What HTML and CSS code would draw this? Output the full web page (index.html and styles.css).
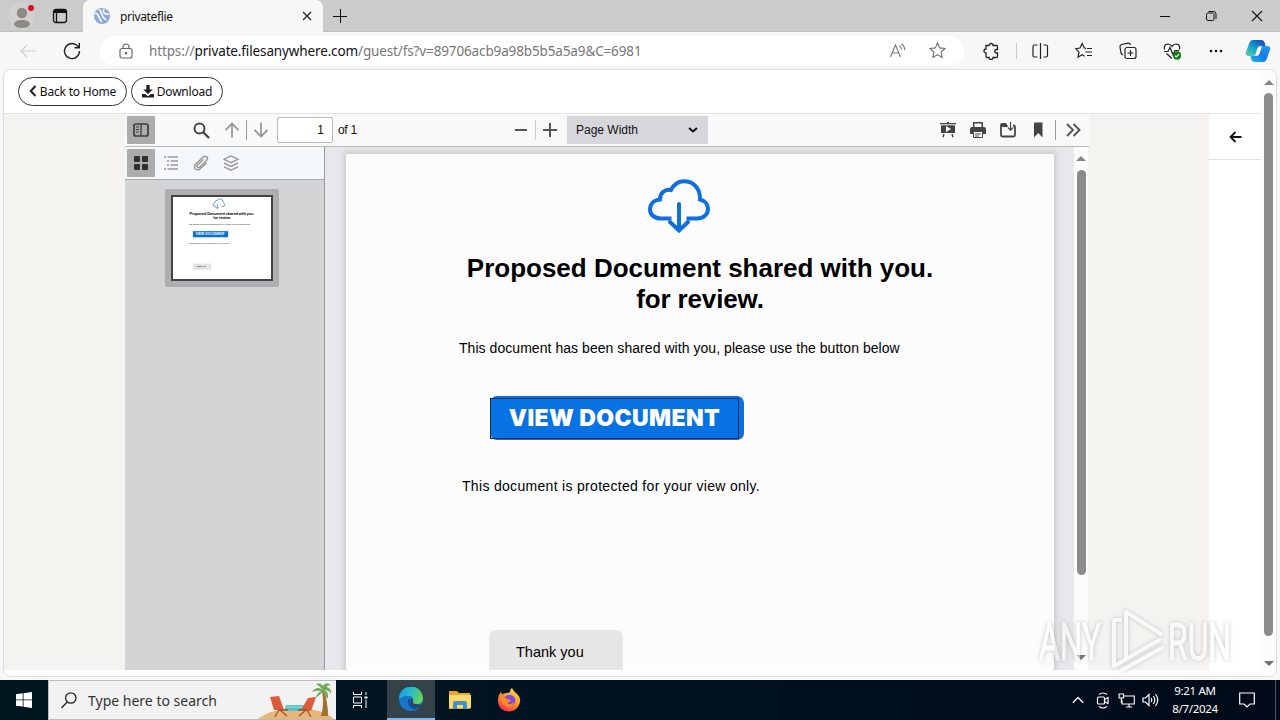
FILE: index.html
```html
<!DOCTYPE html>
<html lang="en">
<head>
  <meta charset="UTF-8">
  <meta name="viewport" content="width=device-width, initial-scale=1.0">
  <title>privateflie</title>
  <link rel="stylesheet" href="styles.css">
</head>
<body>
  <div class="desktop">
    <header class="titlebar">
      <div class="profile">
        <svg width="28" height="28" viewBox="0 0 28 28"><circle cx="14" cy="14" r="13" fill="#d3d1d0"/><circle cx="14" cy="11" r="5.2" fill="#8c8987"/><path d="M6 22.500c0-3 3-4.500 8-4.500s8 1.500 8 4.500c-1 2.500-4 3.500-8 3.500s-7-1-8-3.500z" fill="#8c8987"/><circle cx="23" cy="6" r="3" fill="#e00b1c"/></svg>
      </div>
      <div class="workspaces">
        <svg width="16" height="16" viewBox="0 0 16 16" fill="none" stroke="#111" stroke-width="1.300"><rect x="1.500" y="1.500" width="13" height="13" rx="2.500"/><path d="M2 3.500h12" stroke-width="3"/><path d="M4.500 4v10"/></svg>
      </div>
      <div class="tab">
        <svg width="16" height="16" viewBox="0 0 16 16"><circle cx="8" cy="8" r="8" fill="#8fa8cf"/><path d="M1 6c3-3 4 6 7 8M4.500 2c3-1 3 9 8 9.500M10 1c-2 3 1 6 5 5" fill="none" stroke="#eef2fa" stroke-width="1.800"/></svg>
        <span class="tab-title">privateflie</span>
        <svg class="tab-close" width="10" height="10" viewBox="0 0 10 10" fill="none" stroke="#222" stroke-width="1.200"><path d="M1 1l8 8M9 1l-8 8"/></svg>
      </div>
      <svg class="new-tab" width="14" height="14" viewBox="0 0 14 14" fill="none" stroke="#111"><path d="M7.500 0v14M0 7.500h14"/></svg>
      <div class="window-buttons">
        <svg width="12" height="12" viewBox="0 0 12 12" fill="none" stroke="#111"><path d="M1 6.500h10"/></svg>
        <svg width="12" height="12" viewBox="0 0 12 12" fill="none" stroke="#111"><rect x="1.500" y="3" width="7.500" height="7.500" rx="1.500"/><path d="M3.500 1.500h5q2.500 0 2.500 2.500v5"/></svg>
        <svg width="12" height="12" viewBox="0 0 12 12" fill="none" stroke="#111" stroke-width="1.100"><path d="M1 1l10 10M11 1L1 11"/></svg>
      </div>
    </header>

    <nav class="browser-bar">
      <div class="nav-button"><svg width="18" height="18" viewBox="0 0 18 18" fill="none" stroke="#cfcfcf" stroke-width="1.200"><path d="M17 9H2M8 3L2 9l6 6"/></svg></div>
      <div class="nav-button"><svg width="18" height="18" viewBox="0 0 18 18" fill="none" stroke="#222" stroke-width="1.400"><path d="M16.500 9A7.500 7.500 0 1 1 13.800 3.300L16 5.500M16.300 1v4.800h-4.800"/></svg></div>
      <div class="address">
        <svg class="lock" width="14" height="16" viewBox="0 0 14 16" fill="none" stroke="#666" stroke-width="1.200"><rect x="1" y="5.500" width="12" height="9.500" rx="2"/><path d="M4 5.500V4a3 3 0 0 1 6 0v1.500"/><circle cx="7" cy="10.200" r=".7" fill="#666"/></svg>
        <span class="url">https://<b>private.filesanywhere.com</b>/guest/fs?v=89706acb9a98b5b5a5a9&amp;C=6981</span>
        <svg class="read" width="18" height="16" viewBox="0 0 18 16" fill="none" stroke="#777" stroke-width="1.100"><path d="M1.500 14L6.500 2l5 12M3.200 10h6.600M10.500 2.500q2 1.500 2 4M12.500.800q3.200 2.200 3.200 6.500"/></svg>
        <svg class="star" width="17" height="17" viewBox="0 0 17 17" fill="none" stroke="#777" stroke-width="1.200"><path d="M8.500 1l2.200 4.900 5.300.6-3.900 3.600 1 5.300-4.600-2.600-4.600 2.600 1-5.300L1 6.500l5.300-.6z"/></svg>
      </div>
      <div class="actions">
        <svg width="18" height="18" viewBox="0 0 18 18" fill="none" stroke="#222" stroke-width="1.300"><path d="M4 3.500h3a2 2 0 0 1 4 0h3.500q1 0 1 1v3h-1a1.700 1.700 0 0 0 0 3.500h1v3.500q0 1-1 1H11a2 2 0 0 1-4 0H5q-1 0-1-1V11a2 2 0 1 1 0-4z"/></svg>
        <i class="bar-line"></i>
        <svg width="18" height="18" viewBox="0 0 18 18" fill="none" stroke="#222" stroke-width="1.200"><path d="M9.500 1v16M6.500 3H3.500Q2 3 2 4.500v9Q2 15 3.500 15h3M12.500 3h2.500q1.500 0 1.500 1.500v9q0 1.500-1.500 1.500h-2.500"/></svg>
        <svg width="18" height="18" viewBox="0 0 18 18" fill="none" stroke="#222" stroke-width="1.200"><path d="M11 6.300l-1.700-.3L7.200 1.500 5 6l-4.300.7L4 10.200l-1 5 4.200-2.400 2.300 1.500M12 6.500h5M10.500 10H17M12 13.500h5"/></svg>
        <svg width="18" height="18" viewBox="0 0 18 18" fill="none" stroke="#222" stroke-width="1.200"><rect x="6" y="5.500" width="11" height="11" rx="2"/><path d="M11.500 8v6M8.500 11h6M4 13q-1.500-.5-2-2L1 5q-.3-2 1.500-2.500l6.500-1.300q2-.3 2.500 1.800"/></svg>
        <svg width="18" height="18" viewBox="0 0 18 18" fill="none" stroke="#222" stroke-width="1.200"><path d="M1.500 7.500Q.5 2.500 4.800 2 7.500 2 9 4.300 10.500 2 13.200 2q4.300.5 3.300 5.500M3.500 11.500l5.500 5M1 9.500h4l2-4 3 7 2-4h4"/><circle cx="14" cy="13.500" r="4.200" fill="#107c10" stroke="none"/><path d="M12 13.700l1.400 1.300 2.600-2.800" stroke="#fff"/></svg>
        <svg width="18" height="18" viewBox="0 0 18 18" fill="#111"><circle cx="4" cy="9" r="1.300"/><circle cx="9" cy="9" r="1.300"/><circle cx="14" cy="9" r="1.300"/></svg>
        <svg class="copilot" width="26" height="24" viewBox="0 0 26 24">
          <defs>
            <linearGradient id="copilotA" x1="0" y1="1" x2=".7" y2="0"><stop offset="0" stop-color="#62d09a"/><stop offset=".5" stop-color="#17a6cf"/><stop offset="1" stop-color="#1554b8"/></linearGradient>
            <linearGradient id="copilotB" x1="0" y1="1" x2="1" y2="0"><stop offset="0" stop-color="#1fb4ee"/><stop offset=".5" stop-color="#1678e8"/><stop offset="1" stop-color="#2699ed"/></linearGradient>
          </defs>
          <path d="M8 1h8q3 0 3.800 3l.7 3h-5q-2.500 0-3.300 3l-1.600 5q-.6 2-3 2H4q-4 0-3-4L4.500 3.500Q5.300 1 8 1z" fill="url(#copilotA)"/>
          <path d="M18 23h-8q-3 0-3.800-3l-.7-3h4q2.500 0 3.300-3l1.600-5q.6-2 3-2H22q4 0 3 4l-3.500 9.500Q20.700 23 18 23z" fill="url(#copilotB)"/>
          <path d="M14.500 7.500L11 17l1.500-.3q1.600-.4 2.200-2.400L17 7.500z" fill="#fff"/>
        </svg>
      </div>
    </nav>

    <main class="site">
      <div class="site-content">
        <div class="site-header">
          <a class="pill back"><svg width="8" height="12" viewBox="0 0 8 12" fill="none" stroke="#222" stroke-width="2"><path d="M6.500 1L1.800 6l4.700 5"/></svg>Back to Home</a>
          <a class="pill download"><svg width="12" height="13" viewBox="0 0 12 13" fill="#222"><path d="M4.300 0h3.400v4.500h3L6 9.300 1.300 4.500h3zM0 9h3.200L6 11.300 8.800 9H12v3.500H0z"/></svg>Download</a>
        </div>
        <div class="site-body">
          <section class="viewer">
            <div class="pdf-toolbar">
              <div class="group left">
                <div class="tool active"><svg width="16" height="16" viewBox="0 0 16 16" fill="none" stroke="#3b3b3b" stroke-width="1.700"><rect x="1" y="2" width="14" height="12" rx="2"/><path d="M8 2v12" stroke-width="1.300"/><path d="M3 5h3M3 7.500h3M3 10h3" stroke-width="1"/></svg></div>
                <div class="tool search"><svg width="17" height="17" viewBox="0 0 17 17" fill="none" stroke="#444" stroke-width="2"><circle cx="6.500" cy="6.500" r="5"/><path d="M10 10l6 6" stroke-width="2.300"/></svg></div>
                <div class="tool up"><svg width="16" height="16" viewBox="0 0 16 16" fill="none" stroke="#999" stroke-width="1.800"><path d="M8 15.500V1.500M1.500 8L8 1.500 14.500 8"/></svg></div>
                <i class="sep"></i>
                <div class="tool"><svg width="16" height="16" viewBox="0 0 16 16" fill="none" stroke="#999" stroke-width="1.800"><path d="M8 .5v14M1.500 8L8 14.500 14.500 8"/></svg></div>
                <div class="page-number">1</div>
                <span class="page-count">of 1</span>
              </div>
              <div class="group middle">
                <div class="tool"><svg width="14" height="14" viewBox="0 0 14 14" stroke="#555" stroke-width="2"><path d="M1 7h12"/></svg></div>
                <i class="sep light"></i>
                <div class="tool"><svg width="14" height="14" viewBox="0 0 14 14" stroke="#555" stroke-width="2"><path d="M0 7h14M7 0v14"/></svg></div>
                <div class="scale">Page Width<svg width="10" height="6" viewBox="0 0 10 6" fill="none" stroke="#111" stroke-width="2"><path d="M1 1l4 3.500L9 1"/></svg></div>
              </div>
              <div class="group right">
                <div class="tool"><svg width="16" height="16" viewBox="0 0 16 16" fill="#444"><path d="M0 1h7V0h2v1h7v1.300H0zM1 3.200h14V11H1zM4 12l-1 3.300M12 12l1 3.300" /><path d="M4 12l-1 3.300M12 12l1 3.300" stroke="#444" stroke-width="1.400"/><path d="M6 4v6l5-3z" fill="#fff"/></svg></div>
                <div class="tool"><svg width="16" height="16" viewBox="0 0 16 16" fill="#444"><path d="M3 0h10v5H3zM0 7q0-2 2-2h12q2 0 2 2v5h-3V9.500H3V12H0z"/><path d="M4.500 1.500h7V5h-7z" fill="#fff"/><path d="M3.500 9.500h9v6h-9z" fill="#fff" stroke="#444"/><path d="M5 12h6M5 14h4" stroke="#444"/></svg></div>
                <div class="tool"><svg width="16" height="16" viewBox="0 0 16 16" fill="none" stroke="#444" stroke-width="1.800"><path d="M7 4.500L5.500 2H2q-1 0-1 1v10q0 1.500 1.500 1.500h11Q15 14.500 15 13V5q0-1.500-1.500-1.500h-.5"/><path d="M1 4h6.500" stroke-width="2"/><path d="M10.500 0v8M7.800 5.500l2.700 2.700 2.700-2.700" stroke-width="1.200"/></svg></div>
                <div class="tool"><svg width="16" height="16" viewBox="0 0 16 16" fill="#444"><path d="M4 .5h8.500v15L8.200 11 4 15.500z"/></svg></div>
                <i class="sep last"></i>
                <div class="tool"><svg width="16" height="16" viewBox="0 0 16 16" fill="none" stroke="#555" stroke-width="1.900"><path d="M2 2l6 6-6 6M8.500 2l6 6-6 6"/></svg></div>
              </div>
            </div>
            <div class="pdf-body">
              <aside class="sidebar">
                <div class="sidebar-tools">
                  <div class="tool active"><svg width="16" height="16" viewBox="0 0 16 16" fill="#303030"><rect x="1" y="1" width="6" height="6" rx="1"/><rect x="9" y="1" width="6" height="6" rx="1"/><rect x="1" y="9" width="6" height="6" rx="1"/><rect x="9" y="9" width="6" height="6" rx="1"/></svg></div>
                  <div class="tool"><svg width="16" height="16" viewBox="0 0 16 16" stroke="#999" stroke-width="1.500"><path d="M1 2h2M4.500 2H15M4 6h2M7.500 6H15M4 10h2M7.500 10H15M1 14h2M4.500 14H15"/></svg></div>
                  <div class="tool"><svg width="16" height="16" viewBox="0 0 16 16" fill="none" stroke="#999" stroke-width="1.500"><path d="M10.500 4.500l-6 5.500q-1 1.500.3 2.300 1 .7 2-.3l6.700-6.400q2-2.300.2-3.900-1.700-1.300-3.700.5L2.500 9.300q-2 2.500 0 4.700 2.300 1.800 4.700-.2l6.500-6"/></svg></div>
                  <div class="tool"><svg width="16" height="16" viewBox="0 0 16 16" fill="none" stroke="#999" stroke-width="1.400"><path d="M8 .8l7 3.400-7 3.400-7-3.400zM1 8l7 3.400L15 8M1 11.800l7 3.400 7-3.400"/></svg></div>
                </div>
                <div class="thumb">
                  <svg width="102" height="84" viewBox="0 0 708 583" font-family="Liberation Sans" font-weight="bold">
                    <path d="M324 66h-9a17 17 0 0 1-1-31 17 17 0 0 1 17-14 24 24 0 0 1 45 14 17 17 0 0 1-1 31h-9M333 48v30M324 70l9 9 9-9" transform="translate(-13)" fill="none" stroke="#1a6fd8" stroke-width="5"/>
                    <text x="120" y="124" font-size="28" textLength="466">Proposed Document shared with you.</text>
                    <text x="291" y="155" font-size="28" textLength="126">for review.</text>
                    <text x="113" y="200" font-size="14" textLength="441" font-weight="normal">This document has been shared with you, please use the button below</text>
                    <rect x="144" y="242" width="254" height="44" fill="#0870dc"/>
                    <text x="163" y="273" font-size="24" fill="#fff" textLength="210">VIEW DOCUMENT</text>
                    <text x="116" y="337" font-size="14" textLength="298" font-weight="normal">This document is protected for your view only.</text>
                    <rect x="143" y="476" width="134" height="44" rx="6" fill="#e4e4e4"/>
                    <text x="170" y="503" font-size="15" textLength="67" font-weight="normal">Thank you</text>
                  </svg>
                </div>
              </aside>
              <div class="pages">
                <article class="page">
                  <svg class="cloud" width="62" height="55" viewBox="0 0 62 55" fill="none" stroke="#0f70dc" stroke-width="4"><path d="M23.500 39.500H13C6 39.500 2 35.500 2 30.500c0-5.500 4-9.500 10-10C12 14 17 9.500 23 11 26 5 30.500 2.200 36 2.200 45 2.200 52.500 9 52 20.500c4.500 1 8 4.500 8 9.500 0 5.500-4.500 9.500-11 9.500H38.500"/><path d="M31 25v26M22 43l9 8.500 9-8.500" stroke-linecap="round"/></svg>
                  <h1><span class="line-one">Proposed Document shared with you.</span><br><span class="line-two">for review.</span></h1>
                  <p class="shared">This document has been shared with you, please use the button below</p>
                  <a class="view-button"><span>VIEW DOCUMENT</span></a>
                  <p class="protected">This document is protected for your view only.</p>
                  <div class="thanks">Thank you</div>
                </article>
              </div>
              <div class="scrollbar inner"><i class="arrow up"></i><i class="grip"></i><i class="arrow down"></i></div>
            </div>
          </section>
          <div class="side-panel">
            <div class="panel-toggle"><svg width="13" height="12" viewBox="0 0 13 12" fill="none" stroke="#111" stroke-width="1.800"><path d="M12.500 6H1.500M6.500 1L1.500 6l5 5"/></svg></div>
          </div>
        </div>
      </div>
      <div class="scrollbar outer"><i class="arrow up"></i><i class="grip"></i><i class="arrow down"></i></div>
    </main>

    <footer class="taskbar">
      <div class="task start"><svg width="16" height="16" viewBox="0 0 16 16" fill="#fff"><path d="M0 2.300L6.700 1.300v6.200H0zM7.500 1.200L16 0v7.500H7.500zM0 8.300h6.700v6.300L0 13.700zM7.500 8.300H16V16l-8.500-1.200z"/></svg></div>
      <div class="task-search">
        <svg width="16" height="17" viewBox="0 0 16 17" fill="none" stroke="#222" stroke-width="1.300"><circle cx="9.800" cy="6" r="5.200"/><path d="M6.200 10L.5 16"/></svg>
        <span>Type here to search</span>
        <svg class="beach" width="80" height="38" viewBox="0 0 80 38">
          <path d="M2 38q12-10 38-11 28 1 38 11z" fill="#e8b778"/>
          <path d="M30 24h20v6H28z" fill="#57bfc9"/><path d="M30 26h20" stroke="#9ae2d6"/>
          <path d="M65 35q3.500-12 1-25l2-1q4 13 4 26z" fill="#a0702e"/>
          <path d="M67 9q-6-5-11 2 5-2 9-1-5 3-5 7 4-4 7-6 3 3 4 7 3-5-2-9 4 0 6 4 1-6-5-7 2-2 5-2-5-4-8 1-3-4-7-2 4 2 6 5z" fill="#6faa58"/>
          <path d="M14 16l9-1 5 14H18z" fill="#dc5b3a"/><path d="M60 16l-8 1-7 12 10 1z" fill="#dc5b3a"/>
          <path d="M19 36l4-7h9M24 29l7 6M55 36l-4-7H42M50 29l-7 6" fill="none" stroke="#9c5438" stroke-width="1.300"/>
        </svg>
      </div>
      <div class="task view"><svg width="16" height="16" viewBox="0 0 16 16" fill="none" stroke="#fff"><path d="M1.500 0v2.500h8V0M1.500 16v-2.500h8V16M1.500 5h8v6h-8zM14 0v3M14 7.500V16"/><path d="M12.500 5.500h3" stroke-width="2"/></svg></div>
      <div class="task edge">
        <svg width="24" height="24" viewBox="0 0 24 24">
          <defs><linearGradient id="edgeTop" x1="0" y1="0" x2="1" y2=".3"><stop offset="0" stop-color="#2095df"/><stop offset=".5" stop-color="#24b8d2"/><stop offset="1" stop-color="#61d160"/></linearGradient></defs>
          <circle cx="12" cy="12" r="12" fill="#1675c8"/>
          <path d="M0 12A12 12 0 0 1 24 11q0 6-6 6-5 0-4-3 1-4-3-5-6-1-11 3z" fill="url(#edgeTop)"/>
          <path d="M9 12q-1 8 6 10 4 .5 7-4-4 2-8 0-4-2-2.500-6z" fill="#164c94"/>
          <path d="M12 11.500q2 0 2 2.500-1.500 3 4 3.500h4.500l-.7 1.500q-9 1.500-10.300-4z" fill="#344049"/>
        </svg>
      </div>
      <div class="task"><svg width="22" height="20" viewBox="0 0 22 20"><path d="M0 1h8l2 2h11v16H0z" fill="#e9a72f"/><path d="M0 5h22v13H0z" fill="#ffd968"/><path d="M4 19v-6q0-2 2-2h10q2 0 2 2v6h-4v-4H8v4z" fill="#3b91d6"/></svg></div>
      <div class="task"><svg width="24" height="24" viewBox="0 0 24 24">
        <defs><linearGradient id="fox" x1=".8" y1="0" x2=".2" y2="1"><stop offset="0" stop-color="#ffe14a"/><stop offset=".5" stop-color="#ff9226"/><stop offset="1" stop-color="#f5205b"/></linearGradient></defs>
        <path d="M15 0q2 4 4 5 5 4 4 9-2 9-11 9.500Q2 23 1 14 .5 8 4 4l1 2.500Q7 5 9.500 5q2.500 0 3.500-1 0-3 2-4z" fill="url(#fox)"/><circle cx="12.500" cy="12.500" r="5.800" fill="#8148df"/><path d="M4 10q4-1 6 1l4 1q-1 2-4 3 3 3 7-1-1 6-7 5-6-2-6-9z" fill="#ff8a22"/></svg></div>
      <div class="tray">
        <svg class="chevron" width="12" height="8" viewBox="0 0 12 8" fill="none" stroke="#fff" stroke-width="1.300"><path d="M.8 6.800L6 1.500l5.200 5.300"/></svg>
        <svg class="meet" width="14" height="17" viewBox="0 0 14 17" fill="none" stroke="#fff" stroke-width="1.200"><rect x="1.500" y="5" width="7" height="7" rx="1"/><path d="M8.500 7.500L12 5.500v6l-3.500-2M3 2.500Q7-.5 11 2.500M3 14.500q4 3 8 0"/></svg>
        <svg class="network" width="17" height="15" viewBox="0 0 17 15" fill="none" stroke="#fff" stroke-width="1.100"><path d="M6 3h10.300v8H4V7M8 14h6M11 11v3M1 1h4.500v4H1zM3.300 5v5"/></svg>
        <svg class="sound" width="17" height="14" viewBox="0 0 17 14" fill="none" stroke="#fff" stroke-width="1.200"><path d="M1 5h2.500L7 1.500v11L3.500 9H1zM9 5q1.500 2 0 4M11.300 3q3 4 0 8M13.500 1q4.500 6 0 12"/></svg>
        <div class="clock"><div>9:21 AM</div><div>8/7/2024</div></div>
        <svg class="notice" width="16" height="17" viewBox="0 0 16 17" fill="none" stroke="#fff" stroke-width="1.200"><path d="M.7 1h14.600v11H11l-3 3-3-3H.7z"/></svg>
        <i class="show-desktop"></i>
      </div>
    </footer>

    <svg class="watermark" width="210" height="68" viewBox="0 0 210 68" font-family="Roboto" font-size="52">
      <text x="3" y="54" textLength="62" lengthAdjust="spacingAndGlyphs">ANY</text>
      <text x="132" y="54" textLength="63" lengthAdjust="spacingAndGlyphs">RUN</text>
      <g fill="none" stroke-width="4" stroke-linejoin="round" stroke-linecap="round"><path d="M90 52V6l35 22M78 52V14h6M78 16v44l45-26M86 64l40-22"/></g>
    </svg>
  </div>
</body>
</html>
```

FILE: styles.css
```css
* {
  box-sizing: border-box;
}
body {
  margin: 0;
  font-family: "Noto Sans", "Open Sans", sans-serif;
  color: #111;
}
svg {
  display: block;
  flex: none;
}
i {
  display: block;
  flex: none;
}
.desktop {
  position: relative;
  width: 1280px;
  height: 720px;
  display: flex;
  flex-direction: column;
  overflow: hidden;
  background: #f7f7f7;
}

/* browser chrome */
.titlebar {
  height: 32px;
  display: flex;
  align-items: center;
  background: #cbcbcb;
  border-bottom: 1px solid #c0c0c0;
}
.profile {
  width: 44px;
  padding-left: 8px;
}
.workspaces {
  width: 39px;
  padding-left: 8px;
}
.tab {
  width: 240px;
  height: 32px;
  margin-bottom: -1px;
  padding: 0 11px;
  display: flex;
  align-items: center;
  background: #f7f7f7;
  border-radius: 7px 7px 0 0;
}
.tab-title {
  margin-left: 10px;
  font-size: 12px;
  letter-spacing: -0.35px;
}
.tab-close {
  margin-left: auto;
}
.new-tab {
  margin-left: 10px;
}
.window-buttons {
  margin-left: auto;
  padding-right: 17px;
  display: flex;
  gap: 34px;
}
.browser-bar {
  height: 37px;
  display: flex;
  align-items: center;
  padding-left: 6px;
}
.nav-button {
  width: 44px;
  display: flex;
  justify-content: center;
}
.address {
  width: 864px;
  height: 30px;
  margin-left: 6px;
  padding: 0 18px 0 19px;
  display: flex;
  align-items: center;
  background: #fff;
  border-radius: 15px;
}
.url {
  margin-left: 16px;
  font-size: 13.5px;
  letter-spacing: -0.13px;
  color: #777;
  white-space: nowrap;
}
.url b {
  font-weight: 400;
  color: #111;
}
.read {
  margin-left: auto;
}
.star {
  margin-left: 22px;
}
.actions {
  flex: 1;
  display: flex;
  align-items: center;
  gap: 26px;
  padding-left: 18px;
}
.bar-line {
  width: 1px;
  height: 16px;
  margin: 0 -12px 0 -10px;
  background: #ccc;
}
.copilot {
  margin-left: -6px;
}

/* page frame */
.site {
  width: 1274px;
  height: 608px;
  margin-left: 3px;
  display: flex;
  background: #fff;
  border: 1px solid #dedede;
  border-radius: 8px;
  overflow: hidden;
}
.site-content {
  width: 1257px;
}
.site-header {
  height: 44px;
  padding: 7px 14px;
  display: flex;
  gap: 4px;
  border-bottom: 1px solid #e2e2e2;
}
.pill {
  height: 29px;
  display: flex;
  align-items: center;
  justify-content: center;
  gap: 3px;
  border: 1px solid #333;
  border-radius: 15px;
  padding-bottom: 1px;
  font-size: 12px;
  letter-spacing: -0.2px;
  white-space: nowrap;
}
.back {
  width: 109px;
}
.download {
  width: 92px;
}
.site-body {
  height: 556px;
  padding-left: 121px;
  display: flex;
  background: #f5f3ef;
}
.viewer {
  width: 964px;
  height: 556px;
}
.side-panel {
  width: 52px;
  margin-left: auto;
  background: #fff;
}
.panel-toggle {
  height: 46px;
  display: flex;
  align-items: center;
  justify-content: center;
  border-bottom: 1px solid #e0e0e0;
}

/* pdf viewer */
.pdf-toolbar {
  height: 33px;
  display: flex;
  padding: 0 2px;
  background: #f9f9fa;
  border-bottom: 1px solid #b8b8b8;
}
.group {
  display: flex;
  align-items: center;
}
.left {
  width: 380px;
}
.right {
  margin-left: auto;
}
.right .tool + .tool {
  margin-left: 2px;
}
.tool {
  width: 28px;
  height: 28px;
  display: flex;
  align-items: center;
  justify-content: center;
}
.tool.active {
  background: #acacac;
  border-radius: 1px;
}
.search {
  margin-left: 32px;
}
.tool.up {
  margin-left: 3px;
}
.sep {
  width: 1px;
  height: 20px;
  background: #999;
}
.light {
  background: #ccc;
}
.last {
  margin: 0 3px;
}
.page-number {
  width: 56px;
  height: 26px;
  margin-left: 2px;
  padding-right: 8px;
  background: #fff;
  border: 1px solid #bbb;
  border-radius: 2px;
  font: 12px/24px "Liberation Sans", sans-serif;
  text-align: right;
}
.page-count {
  margin-left: 5px;
  font: 12px "Liberation Sans", sans-serif;
  letter-spacing: -0.3px;
}
.scale {
  width: 141px;
  height: 28px;
  margin-left: 3px;
  padding: 0 10px 0 9px;
  display: flex;
  align-items: center;
  justify-content: space-between;
  background: #d7d7db;
  font: 12px "Liberation Sans", sans-serif;
}
.pdf-body {
  height: 523px;
  display: flex;
}
.sidebar {
  width: 200px;
  background: #d4d4d7;
  border-right: 1px solid #999;
}
.sidebar-tools {
  height: 33px;
  padding: 0 2px;
  display: flex;
  align-items: center;
  gap: 2px;
  background: #f5f8fb;
  border-bottom: 1px solid #aaa;
}
.thumb {
  width: 114px;
  height: 98px;
  margin: 9px 0 0 40px;
  padding: 6px;
  background: #aeaeb0;
  border-radius: 2px;
}
.thumb svg {
  width: 102px;
  height: 86px;
  background: #fff;
  border: 2px solid #444;
}
.pages {
  width: 749px;
  padding: 7px 20px 0 21px;
  background: #e8e8ec;
  overflow: hidden;
}
.page {
  width: 708px;
  height: 540px;
  overflow: hidden;
  background: #fcfcfc;
  box-shadow: 0 0 6px 2px #c9c9cb;
}
.cloud {
  margin: 25px 0 0 302px;
}
.page h1 {
  margin: 19px 0 0;
  font: bold 26px/31px "Liberation Sans", Arial, sans-serif;
  text-align: center;
  color: #000;
}
.line-one {
  letter-spacing: -0.01px;
}
.line-two {
  letter-spacing: -0.15px;
}
.page p {
  font: 14px/16px "Liberation Sans", Arial, sans-serif;
  white-space: nowrap;
  color: #000;
}
.page .shared {
  margin: 25px 0 0 113px;
  letter-spacing: 0.05px;
}
.page .protected {
  margin: 38px 0 0 116px;
  letter-spacing: 0.31px;
}
.view-button {
  display: block;
  width: 254px;
  height: 44px;
  margin: 40px 0 0 144px;
  padding-top: 2px;
  background: #0672e3;
  border-radius: 7px;
}
.view-button span {
  display: block;
  width: 249px;
  height: 41px;
  border: 1px solid #122c50;
  font: 900 23px/39px Inter, "Liberation Sans", sans-serif;
  letter-spacing: 0.4px;
  text-align: center;
  color: #fff;
}
.thanks {
  width: 134px;
  height: 60px;
  margin: 136px 0 0 143px;
  background: #e6e6e6;
  border-radius: 7px;
  padding-left: 27px;
  font: 14.5px/45px "Liberation Sans", Arial, sans-serif;
  color: #000;
}

/* scrollbars */
.scrollbar {
  display: flex;
  flex-direction: column;
  align-items: center;
  background: #fcfcfc;
}
.grip {
  width: 9px;
  background: #8b8b8b;
  border-radius: 5px;
}
.arrow {
  border: 5px solid transparent;
}
.arrow.up {
  border-top: 0;
  border-bottom: 5px solid #858585;
}
.arrow.down {
  border-bottom: 0;
  border-top: 5px solid #707070;
}
.inner {
  width: 14px;
  padding: 9px 0 10px;
}
.inner .grip {
  height: 405px;
  margin-top: 9px;
}
.inner .arrow.down {
  margin-top: auto;
}
.outer {
  width: 15px;
  padding: 10px 0;
}
.outer .grip {
  height: 543px;
  margin-top: 8px;
}
.outer .arrow.down {
  margin-top: auto;
}

/* taskbar */
.taskbar {
  height: 40px;
  margin-top: 3px;
  display: flex;
  background: linear-gradient(90deg, #001720, #001222 50%, #000a18);
}
.task {
  width: 49px;
  height: 40px;
  display: flex;
  align-items: center;
  justify-content: center;
}
.start {
  width: 48px;
}
.view {
  width: 51px;
  padding-right: 3px;
}
.edge {
  width: 48px;
  background: #34434a;
  border-bottom: 2px solid #75b9ec;
}
.task-search {
  width: 288px;
  display: flex;
  align-items: center;
  padding-left: 12px;
  background: #f2f2f2;
  border: 1px solid #bbb;
  border-right: 0;
  font-size: 14px;
  color: #333;
}
.task-search span {
  margin-left: 11px;
  white-space: nowrap;
}
.beach {
  margin-left: auto;
}
.tray {
  margin-left: auto;
  display: flex;
  align-items: center;
  color: #fff;
}
.meet {
  margin-left: 12px;
}
.network {
  margin-left: 8px;
}
.sound {
  margin-left: 7px;
}
.clock {
  width: 60px;
  margin-left: 6px;
  font-size: 11.5px;
  line-height: 18px;
  letter-spacing: -0.3px;
  text-align: center;
  white-space: nowrap;
}
.notice {
  margin-left: 14px;
}
.show-desktop {
  width: 1px;
  height: 40px;
  margin: 0 4px 0 20px;
  background: #4b5560;
}

.watermark {
  position: absolute;
  left: 1036px;
  top: 606px;
  fill: #fff;
  stroke: #fff;
  opacity: 0.55;
  filter: drop-shadow(0 0 2px #999);
}
```
